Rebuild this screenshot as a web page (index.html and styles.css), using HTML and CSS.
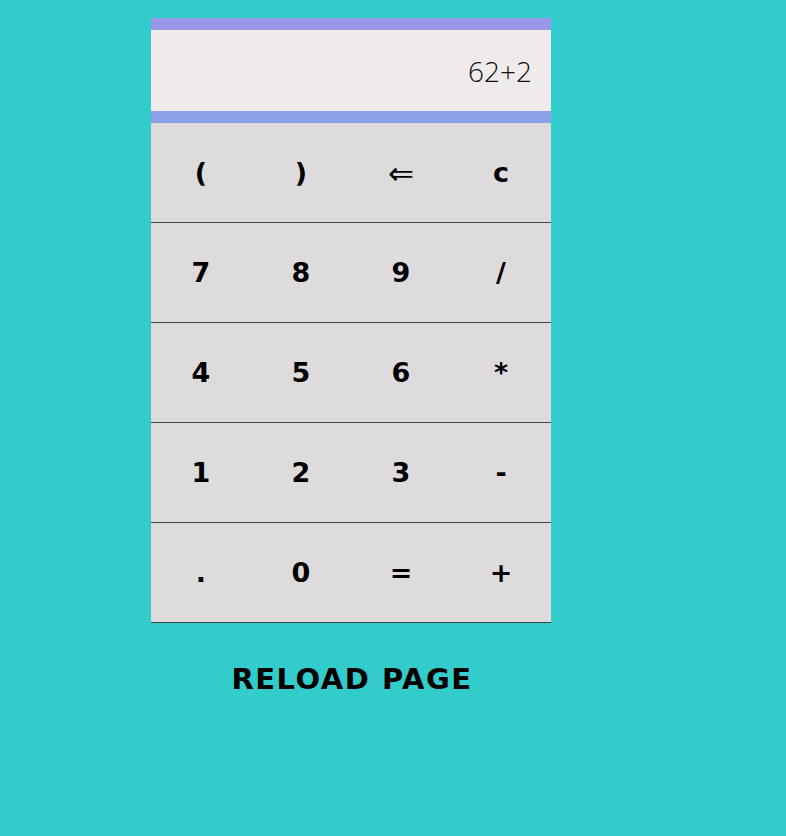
FILE: index.html
```html
<!DOCTYPE html>
<html>
<head>
<meta charset="utf-8">
<link rel="stylesheet" href="styles.css">
</head>
<body>
<div class="wrap">
  <div class="calc">
    <div class="bar bar-top"></div>
    <div class="display">62+2</div>
    <div class="bar bar-bottom"></div>
    <div class="keys">
      <div class="key">(</div><div class="key">)</div><div class="key arrow">&lArr;</div><div class="key">c</div>
      <div class="key">7</div><div class="key">8</div><div class="key">9</div><div class="key">/</div>
      <div class="key">4</div><div class="key">5</div><div class="key">6</div><div class="key">*</div>
      <div class="key">1</div><div class="key">2</div><div class="key">3</div><div class="key">-</div>
      <div class="key">.</div><div class="key">0</div><div class="key">=</div><div class="key">+</div>
    </div>
  </div>
  <div class="reload">RELOAD PAGE</div>
</div>
</body>
</html>
```
FILE: styles.css
```css
html, body {
  margin: 0;
  padding: 0;
  background: #33cccc;
  font-family: "DejaVu Sans", "Open Sans", sans-serif;
  color: #000;
}
.wrap {
  width: 400px;
  margin-left: 151px;
  padding-top: 18px;
}
.calc {
  display: flex;
  flex-direction: column;
}
.bar {
  height: 12px;
}
.bar-top { background: #9b97e8; }
.bar-bottom { background: #8aa0e7; }
.display {
  height: 81px;
  background: #f0ebeb;
  display: flex;
  align-items: center;
  justify-content: flex-end;
  padding-right: 19px;
  font-size: 28px;
  font-weight: 300;
  font-family: "Open Sans", sans-serif;
  color: #111;
}
.keys {
  display: grid;
  grid-template-columns: repeat(4, 100px);
  background: #dddbdc;
}
.key {
  height: 99px;
  border-bottom: 1px solid #444;
  display: flex;
  align-items: center;
  justify-content: center;
  font-size: 27px;
  font-weight: bold;
}
.key.arrow {
  font-weight: normal;
  font-size: 31px;
}
.reload {
  margin-top: 39px;
  text-align: center;
  font-size: 29px;
  font-weight: bold;
  letter-spacing: 1.5px;
  padding-left: 2px;
}
```
